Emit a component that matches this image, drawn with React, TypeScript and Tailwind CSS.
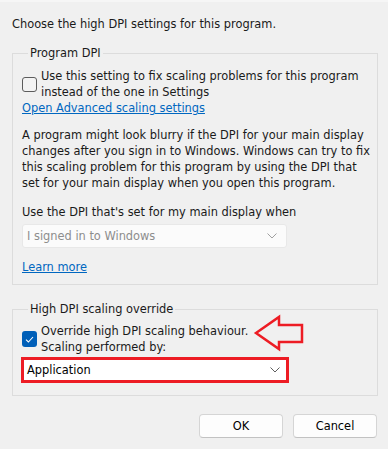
import React from 'react';

const font = { fontFamily: '"DejaVu Sans", "Liberation Sans", sans-serif' };

function Chevron({ color = '#5f5f5f' }: { color?: string }) {
  return (
    <svg width="10" height="6" viewBox="0 0 10 6" fill="none">
      <path d="M0.5 0.5 L5 5 L9.5 0.5" stroke={color} strokeWidth="1" />
    </svg>
  );
}

function Dropdown({ value, disabled }: { value: string; disabled?: boolean }) {
  return (
    <div
      className={
        disabled
          ? 'flex h-[24px] w-[265px] items-center justify-between rounded-[3px] border border-[#e8e8e8] bg-[#fbfbfb] pl-[4px] pr-[9px] text-[#8d8d8d]'
          : 'flex h-[20px] w-full items-center justify-between bg-white pl-[3px] pr-[6px] text-black'
      }
    >
      <span>{value}</span>
      <Chevron color={disabled ? '#a0a0a0' : '#5f5f5f'} />
    </div>
  );
}

function Checkbox({ checked }: { checked?: boolean }) {
  if (checked) {
    return (
      <div className="flex h-[16px] w-[15px] shrink-0 items-center justify-center rounded-[3px] bg-[#005fb8]">
        <svg width="9" height="7" viewBox="0 0 9 7" fill="none">
          <path d="M1 3.6 L3.4 6 L8 1" stroke="white" strokeWidth="1.1" />
        </svg>
      </div>
    );
  }
  return <div className="h-[15px] w-[15px] shrink-0 rounded-[3px] border border-[#5c5c5c] bg-[#f3f3f3]" />;
}

export default function App() {
  return (
    <div className="relative h-[449px] w-[388px] overflow-hidden bg-[#f0f0f0] text-[11.4px] leading-[16px] text-[#1a1a1a]" style={font}>
      <div className="h-[2px] bg-[#f6f6f6]" />
      <div className="px-[12px] pt-[14px]">Choose the high DPI settings for this program.</div>

      {/* Program DPI */}
      <fieldset className="ml-[12px] mr-[10px] mt-[13px] border border-[#dcdcdc] pb-[9px] pl-[9px]">
        <legend className="ml-[6px] px-[2px]">Program DPI</legend>
        <div className="mt-[7px] flex items-center gap-[4px]">
          <Checkbox />
          <div>
            Use this setting to fix scaling problems for this program
            <br />
            instead of the one in Settings
          </div>
        </div>
        <a className="block w-max text-[#0067c0] underline">Open Advanced scaling settings</a>
        <p className="mt-[11px]">
          A program might look blurry if the DPI for your main display
          <br />
          changes after you sign in to Windows. Windows can try to fix
          <br />
          this scaling problem for this program by using the DPI that
          <br />
          set for your main display when you open this program.
        </p>
        <div className="mt-[13px]">Use the DPI that's set for my main display when</div>
        <div className="mt-[4px]">
          <Dropdown value="I signed in to Windows" disabled />
        </div>
        <a className="mt-[11px] block w-max text-[#0067c0] underline">Learn more</a>
      </fieldset>

      {/* High DPI scaling override */}
      <fieldset className="ml-[12px] mr-[10px] mt-[16px] border border-[#dcdcdc] pb-[12px] pl-[9px]">
        <legend className="ml-[6px] px-[2px]">High DPI scaling override</legend>
        <div className="mt-[6px] flex items-center gap-[4px]">
          <Checkbox checked />
          <div>
            Override high DPI scaling behaviour.
            <br />
            Scaling performed by:
          </div>
        </div>
        <div className="ml-[-1px] mt-[2px] w-[268px] border-[3px] border-[#ed1c24]">
          <Dropdown value="Application" />
        </div>
      </fieldset>

      <div className="mt-[18px] flex justify-end gap-[10px] pr-[11px]">
        <button className="h-[24px] w-[84px] rounded-[4px] border border-[#d5d5d5] border-b-[#c2c2c2] bg-[#fdfdfd] text-black">OK</button>
        <button className="h-[24px] w-[84px] rounded-[4px] border border-[#d5d5d5] border-b-[#c2c2c2] bg-[#fdfdfd] text-black">Cancel</button>
      </div>

      {/* annotation arrow */}
      <svg className="absolute left-[253px] top-[314px]" width="52" height="38" viewBox="0 0 52 38" fill="none">
        <path d="M3 19 L26 3 L26 11 L49 11 L49 28 L26 28 L26 35 Z" fill="#f0f0f0" stroke="#ed1c24" strokeWidth="2.5" strokeLinejoin="miter" />
      </svg>
    </div>
  );
}
